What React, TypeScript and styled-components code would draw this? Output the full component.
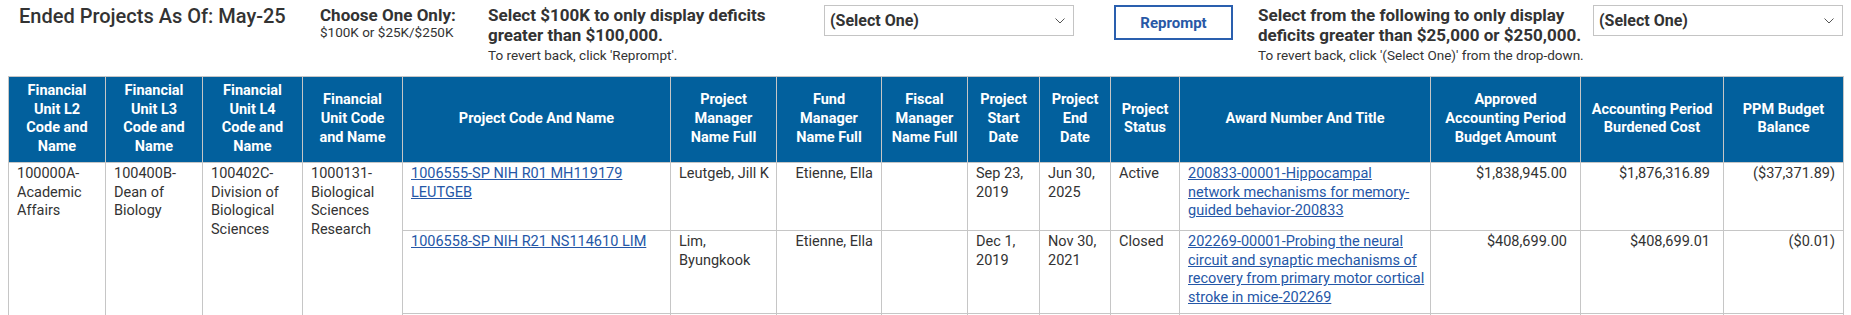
import styled, { createGlobalStyle } from "styled-components";

const GlobalStyle = createGlobalStyle`
  html, body {
    margin: 0;
    padding: 0;
    overflow: hidden;
    background: #fff;
  }
  body {
    font-family: Roboto, "Liberation Sans", Arial, sans-serif;
    color: #333;
  }
`;

const Page = styled.div`
  padding: 0 8px;
  width: 1835px;
`;

const TopBar = styled.div`
  display: flex;
  align-items: flex-start;
  height: 76px;
  padding-top: 5px;
  box-sizing: border-box;
`;

const Title = styled.h1`
  margin: 0;
  width: 312px;
  padding-left: 11px;
  box-sizing: border-box;
  font-size: 20px;
  font-weight: 500;
  line-height: 22px;
  color: #333;
  white-space: nowrap;
`;

const TextBlock = styled.div<{ $width: number }>`
  width: ${(p) => p.$width}px;
  flex-shrink: 0;
  white-space: nowrap;
`;

const Lead = styled.div`
  font-size: 17px;
  font-weight: 700;
  line-height: 20px;
  color: #333;
`;

const Note = styled.div<{ $lineHeight: number }>`
  font-size: 13.5px;
  line-height: ${(p) => p.$lineHeight}px;
  color: #333;
`;

const SelectBox = styled.div`
  width: 250px;
  height: 31px;
  flex-shrink: 0;
  box-sizing: border-box;
  border: 1px solid #c4c4c4;
  background: #fff;
  display: flex;
  align-items: center;
  justify-content: space-between;
  padding: 0 8px 0 5px;
  font-size: 16px;
  font-weight: 700;
  color: #333;
`;

const Button = styled.button`
  width: 119px;
  height: 35px;
  flex-shrink: 0;
  margin: 0 25px 0 40px;
  box-sizing: border-box;
  border: 2px solid #2a5fae;
  background: #fff;
  color: #2858a6;
  font-family: inherit;
  font-size: 15px;
  font-weight: 700;
  cursor: pointer;
`;

const Table = styled.table`
  border-collapse: collapse;
  table-layout: fixed;
  width: 1835px;
  border: 1px solid #c6c6c6;
`;

const Col = styled.col<{ $width: number }>`
  width: ${(p) => p.$width}px;
`;

const Th = styled.th`
  background: #02609d;
  color: #fff;
  font-size: 14.5px;
  font-weight: 700;
  line-height: 18.7px;
  padding: 5px 8px;
  border: 1px solid #c6c6c6;
  text-align: center;
  vertical-align: middle;
`;

const Row = styled.tr<{ $height?: number }>`
  height: ${(p) => (p.$height ? `${p.$height}px` : "auto")};
`;

const Td = styled.td<{ $align?: "left" | "right" }>`
  font-size: 14.5px;
  line-height: 18.7px;
  color: #333;
  padding: 2px ${(p) => (p.$align === "right" ? 8 : 4)}px 5px 8px;
  border: 1px solid #c6c6c6;
  vertical-align: top;
  text-align: ${(p) => p.$align ?? "left"};
`;

const Link = styled.a`
  color: #2557a7;
  text-decoration: underline;
`;

// keeps positive amounts lined up with the closing bracket of negatives
const Bracket = styled.span`
  visibility: hidden;
`;

const Chevron = () => (
  <svg width="10" height="6" viewBox="0 0 10 6" fill="none">
    <polyline points="0.5,0.5 5,5 9.5,0.5" stroke="#555" strokeWidth="1" />
  </svg>
);

const Amount = ({ value }: { value: string }) => (
  <>
    {value}
    {!value.startsWith("(") && <Bracket>)</Bracket>}
  </>
);

const widths = [97, 97, 100, 100, 268, 106, 105, 86, 72, 71, 69, 251, 150, 143, 120];

const headers = [
  "Financial Unit L2 Code and Name",
  "Financial Unit L3 Code and Name",
  "Financial Unit L4 Code and Name",
  "Financial Unit Code and Name",
  "Project Code And Name",
  "Project Manager Name Full",
  "Fund Manager Name Full",
  "Fiscal Manager Name Full",
  "Project Start Date",
  "Project End Date",
  "Project Status",
  "Award Number And Title",
  "Approved Accounting Period Budget Amount",
  "Accounting Period Burdened Cost",
  "PPM Budget Balance",
];

type Project = {
  project: string;
  manager: string;
  fund: string;
  fiscal: string;
  start: string;
  end: string;
  status: string;
  award: string;
  budget: string;
  cost: string;
  balance: string;
  height?: number;
};

const units = [
  "100000A-Academic Affairs",
  "100400B-Dean of Biology",
  "100402C-Division of Biological Sciences",
  "1000131-Biological Sciences Research",
];

const projects: Project[] = [
  {
    project: "1006555-SP NIH R01 MH119179 LEUTGEB",
    manager: "Leutgeb, Jill K",
    fund: "Etienne, Ella",
    fiscal: "",
    start: "Sep 23, 2019",
    end: "Jun 30, 2025",
    status: "Active",
    award: "200833-00001-Hippocampal network mechanisms for memory-guided behavior-200833",
    budget: "$1,838,945.00",
    cost: "$1,876,316.89",
    balance: "($37,371.89)",
    height: 68,
  },
  {
    project: "1006558-SP NIH R21 NS114610 LIM",
    manager: "Lim, Byungkook",
    fund: "Etienne, Ella",
    fiscal: "",
    start: "Dec 1, 2019",
    end: "Nov 30, 2021",
    status: "Closed",
    award:
      "202269-00001-Probing the neural circuit and synaptic mechanisms of recovery from primary motor cortical stroke in mice-202269",
    budget: "$408,699.00",
    cost: "$408,699.01",
    balance: "($0.01)",
  },
];

const ProjectCells = ({ p }: { p: Project }) => (
  <>
    <Td>
      <Link href="#">{p.project}</Link>
    </Td>
    <Td>{p.manager}</Td>
    <Td $align="right">{p.fund}</Td>
    <Td>{p.fiscal}</Td>
    <Td>{p.start}</Td>
    <Td>{p.end}</Td>
    <Td>{p.status}</Td>
    <Td>
      <Link href="#">{p.award}</Link>
    </Td>
    <Td $align="right">
      <Amount value={p.budget} />
    </Td>
    <Td $align="right">
      <Amount value={p.cost} />
    </Td>
    <Td $align="right">
      <Amount value={p.balance} />
    </Td>
  </>
);

const App: React.FC = () => {
  const span = projects.length + 1;

  return (
    <Page>
      <GlobalStyle />
      <TopBar>
        <Title>Ended Projects As Of: May-25</Title>
        <TextBlock $width={168}>
          <Lead>Choose One Only:</Lead>
          <Note $lineHeight={14}>$100K or $25K/$250K</Note>
        </TextBlock>
        <TextBlock $width={336}>
          <Lead>
            Select $100K to only display deficits
            <br />
            greater than $100,000.
          </Lead>
          <Note $lineHeight={20}>To revert back, click 'Reprompt'.</Note>
        </TextBlock>
        <SelectBox>
          (Select One)
          <Chevron />
        </SelectBox>
        <Button>Reprompt</Button>
        <TextBlock $width={335}>
          <Lead>
            Select from the following to only display
            <br />
            deficits greater than $25,000 or $250,000.
          </Lead>
          <Note $lineHeight={20}>
            To revert back, click '(Select One)' from the drop-down.
          </Note>
        </TextBlock>
        <SelectBox>
          (Select One)
          <Chevron />
        </SelectBox>
      </TopBar>

      <Table>
        <colgroup>
          {widths.map((w, i) => (
            <Col key={i} $width={w} />
          ))}
        </colgroup>
        <thead>
          <tr>
            {headers.map((h) => (
              <Th key={h}>{h}</Th>
            ))}
          </tr>
        </thead>
        <tbody>
          {projects.map((p, i) => (
            <Row key={p.project} $height={p.height}>
              {i === 0 &&
                units.map((u) => (
                  <Td key={u} rowSpan={span}>
                    {u}
                  </Td>
                ))}
              <ProjectCells p={p} />
            </Row>
          ))}
          <Row $height={40}>
            {headers.slice(4).map((h) => (
              <Td key={h}>&nbsp;</Td>
            ))}
          </Row>
        </tbody>
      </Table>
    </Page>
  );
};

export default App;
